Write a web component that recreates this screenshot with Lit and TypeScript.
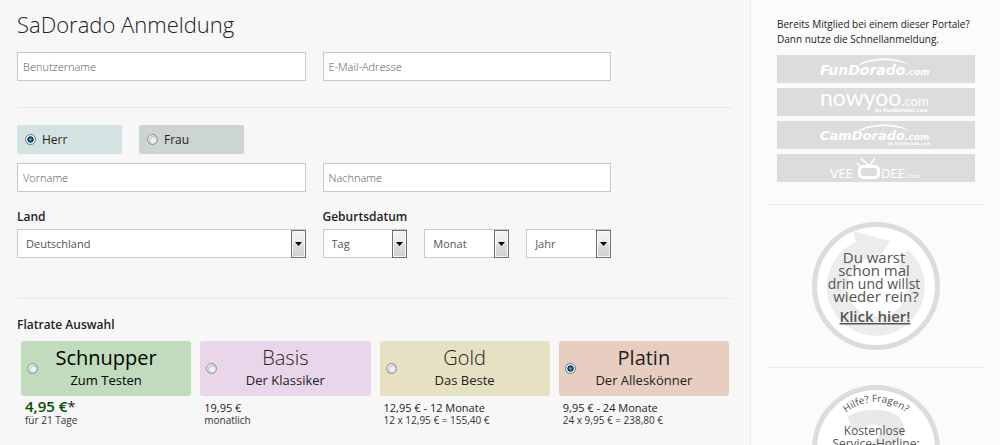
import { LitElement, html, svg, css } from "lit";
import { customElement, state } from "lit/decorators.js";

interface Plan {
  id: string;
  name: string;
  claim: string;
  price: string;
  note: string;
}

const PLANS: Plan[] = [
  { id: "schnupper", name: "Schnupper", claim: "Zum Testen", price: "4,95 €", note: "für 21 Tage" },
  { id: "basis", name: "Basis", claim: "Der Klassiker", price: "19,95 €", note: "monatlich" },
  { id: "gold", name: "Gold", claim: "Das Beste", price: "12,95 € - 12 Monate", note: "12 x 12,95 € = 155,40 €" },
  { id: "platin", name: "Platin", claim: "Der Alleskönner", price: "9,95 € - 24 Monate", note: "24 x 9,95 € = 238,80 €" },
];

const radioStyles = css`
  input[type="radio"] {
    appearance: none;
    flex: none;
    box-sizing: border-box;
    width: 11px;
    height: 11px;
    margin: 0;
    border: 1px solid #8a8f93;
    border-radius: 50%;
    background: radial-gradient(circle at 60% 60%, #f4f4f4 0 20%, #c9ccce 55%, #fff 75%);
  }
  input[type="radio"]:checked {
    border-color: #6d7880;
    background: radial-gradient(circle at 50% 50%, #45b4e0 0 10%, #0f4d74 30%, #123049 44%, #eef3f5 56%);
  }
`;

@customElement("signup-form")
export class SignupForm extends LitElement {
  @state() private gender = "herr";
  @state() private plan = "platin";

  static styles = [
    radioStyles,
    css`
      :host {
        display: block;
        color: #222;
      }
      h1 {
        margin: 0 0 12px;
        font-size: 22px;
        line-height: 32px;
        font-weight: 300;
      }
      .pair {
        display: grid;
        grid-template-columns: 1fr 1fr;
        gap: 17px;
        max-width: 594px;
      }
      .text {
        box-sizing: border-box;
        width: 100%;
        min-width: 0;
        height: 29px;
        padding: 0 5px;
        border: 1px solid #c8c8c8;
        border-radius: 0;
        background: #fff;
        color: #333;
        font: 300 11px/16px "Open Sans", sans-serif;
      }
      .text::placeholder {
        color: #555;
        opacity: 1;
      }
      hr {
        margin: 26px 0 17px;
        border: 0;
        border-top: 1px solid #e9e9e9;
      }
      fieldset {
        min-width: 0;
        margin: 0;
        padding: 0;
        border: 0;
      }
      .genders {
        display: flex;
        gap: 17px;
        margin-bottom: 9px;
      }
      .gender {
        box-sizing: border-box;
        display: flex;
        align-items: center;
        gap: 6px;
        width: 105px;
        height: 29px;
        padding: 0 8px;
        border-radius: 2px;
        background: #cdd5d3;
        font-size: 12px;
        line-height: 18px;
      }
      .gender.on {
        background: #d5e2e2;
      }
      .caption {
        display: block;
        padding: 0;
        font-size: 12px;
        line-height: 16px;
        font-weight: 600;
      }
      .lower {
        margin-top: 17px;
      }
      .lower .caption {
        margin-bottom: 4px;
      }
      .dates {
        display: grid;
        grid-template-columns: repeat(3, 1fr);
        gap: 17px;
      }
      .pick {
        display: grid;
        position: relative;
      }
      .pick select {
        appearance: none;
        box-sizing: border-box;
        width: 100%;
        height: 29px;
        padding: 0 18px 0 8px;
        border: 1px solid #c8c8c8;
        border-radius: 0;
        background: #fff;
        color: #555;
        font: 400 11px/16px "Open Sans", sans-serif;
      }
      .arrow {
        position: absolute;
        top: 1px;
        right: 0;
        width: 15px;
        height: 28px;
        pointer-events: none;
      }
      hr.second {
        margin: 40px 0 18px;
      }
      .plans {
        display: grid;
        grid-template-columns: repeat(4, 1fr);
        gap: 9px;
        padding: 8px 4px 0;
      }
      .card {
        display: grid;
        grid-template-columns: 11px 1fr 11px;
        align-items: center;
        box-sizing: border-box;
        height: 55px;
        padding: 0 6px;
        border-radius: 3px;
        text-align: center;
        font-size: 13px;
        line-height: 18px;
      }
      .title {
        padding-bottom: 4px;
      }
      .name {
        display: block;
        font-size: 20px;
        line-height: 26px;
      }
      .schnupper {
        background: #c1dcbc;
        color: #000;
      }
      .basis {
        background: #ead6ea;
      }
      .gold {
        background: #e6e1c2;
      }
      .platin {
        background: #e8cec0;
      }
      .basis .name,
      .gold .name {
        font-weight: 300;
      }
      .price,
      .note {
        margin: 0 4px;
        font-size: 11px;
        line-height: 13px;
      }
      .price {
        padding-top: 5px;
      }
      .note {
        font-size: 10px;
        color: #333;
      }
      .price.big {
        padding-top: 2px;
        font-size: 15px;
        line-height: 16px;
      }
      .price strong {
        color: #005000;
        font-weight: 600;
      }
    `,
  ];

  private arrow() {
    return html`<svg class="arrow" viewBox="0 0 15 28" aria-hidden="true">
      <defs>
        <linearGradient id="g" x1="0" y1="0" x2="0" y2="1">
          <stop offset="0" stop-color="#f3f3f3"></stop>
          <stop offset=".5" stop-color="#ebebeb"></stop>
          <stop offset=".5" stop-color="#dedede"></stop>
          <stop offset="1" stop-color="#cfcfcf"></stop>
        </linearGradient>
      </defs>
      <rect x=".5" y=".5" width="14" height="27" fill="url(#g)" stroke="#707070"></rect>
      <rect x="1.5" y="1.5" width="12" height="25" fill="none" stroke="#f6f6f6"></rect>
      <path d="M4 12h7l-3.500 4z" fill="#000"></path>
    </svg>`;
  }

  private pick(id: string, label: string, option: string, own = true) {
    return html`<span class="pick">
      ${own
        ? html`<select id=${id} aria-label=${label}><option>${option}</option></select>`
        : html`<select id=${id}><option>${option}</option></select>`}
      ${this.arrow()}
    </span>`;
  }

  private genderChoice(id: string, label: string) {
    return html`<label class="gender ${this.gender === id ? "on" : ""}">
      <input type="radio" name="gender" .checked=${this.gender === id} @change=${() => (this.gender = id)} />
      ${label}
    </label>`;
  }

  private planChoice(p: Plan) {
    const first = p.id === "schnupper";
    return html`<div>
      <label class="card ${p.id}">
        <input type="radio" name="plan" .checked=${this.plan === p.id} @change=${() => (this.plan = p.id)} />
        <span class="title"><span class="name">${p.name}</span>${p.claim}</span>
      </label>
      <div class="price ${first ? "big" : ""}">${first ? html`<strong>${p.price}</strong>*` : p.price}</div>
      <div class="note">${p.note}</div>
    </div>`;
  }

  render() {
    return html`<form>
      <h1>SaDorado Anmeldung</h1>
      <div class="pair">
        <input class="text" placeholder="Benutzername" aria-label="Benutzername" />
        <input class="text" type="email" placeholder="E-Mail-Adresse" aria-label="E-Mail-Adresse" />
      </div>
      <hr />
      <fieldset class="genders" aria-label="Anrede">
        ${this.genderChoice("herr", "Herr")}${this.genderChoice("frau", "Frau")}
      </fieldset>
      <div class="pair">
        <input class="text" placeholder="Vorname" aria-label="Vorname" />
        <input class="text" placeholder="Nachname" aria-label="Nachname" />
      </div>
      <div class="pair lower">
        <div>
          <label class="caption" for="land">Land</label>
          ${this.pick("land", "Land", "Deutschland", false)}
        </div>
        <fieldset>
          <legend class="caption">Geburtsdatum</legend>
          <div class="dates">
            ${this.pick("tag", "Tag", "Tag")}${this.pick("monat", "Monat", "Monat")}${this.pick("jahr", "Jahr", "Jahr")}
          </div>
        </fieldset>
      </div>
      <hr class="second" />
      <fieldset>
        <legend class="caption">Flatrate Auswahl</legend>
        <div class="plans">${PLANS.map((p) => this.planChoice(p))}</div>
      </fieldset>
    </form>`;
  }
}

@customElement("portal-sidebar")
export class PortalSidebar extends LitElement {
  static styles = css`
    :host {
      display: block;
      color: #222;
    }
    .intro {
      margin: 0 9px 8px;
      font-size: 10px;
      line-height: 15px;
    }
    .portals {
      display: grid;
      gap: 5px;
      margin: 0 9px 22px;
    }
    .portal {
      display: block;
      height: 28px;
      background: #dcdcdc;
      color: #fff;
    }
    svg {
      overflow: visible;
    }
    .portal svg {
      display: block;
      width: 100%;
      height: 28px;
      fill: currentColor;
    }
    .wide {
      font-family: "DejaVu Sans", sans-serif;
    }
    .slant {
      font-weight: 700;
      font-style: italic;
    }
    .round {
      font-family: Lato, sans-serif;
    }
    hr {
      margin: 17px 0;
      border: 0;
      border-top: 1px solid #e9e9e9;
    }
    .badge {
      display: block;
      width: 128px;
      margin: 0 auto;
      color: #555;
    }
    .badge svg {
      display: block;
      width: 100%;
      fill: currentColor;
      font-family: "Open Sans", sans-serif;
    }
    .link {
      font-weight: 600;
      text-decoration: underline;
      text-decoration-thickness: 1px;
      text-underline-offset: 2px;
    }
  `;

  private swoosh = svg`<path d="M81 10C92 2 121 1 132 10C119 4 97 4 86 9z"></path>`;

  render() {
    return html`
      <p class="intro">Bereits Mitglied bei einem dieser Portale?<br />Dann nutze die Schnellanmeldung.</p>
      <nav class="portals">
        <a class="portal" href="#fundorado" aria-label="FunDorado.com">
          <svg viewBox="0 0 198 28" class="wide slant">
            ${this.swoosh}
            <text x="43" y="20" font-size="14">FunDorado<tspan font-size="9">.com</tspan></text>
          </svg>
        </a>
        <a class="portal" href="#nowyoo" aria-label="nowyoo.com">
          <svg viewBox="0 0 198 28" class="round">
            <text x="43" y="18" font-size="23">nowyoo<tspan font-size="13">.com</tspan></text>
            <text x="98" y="24" font-size="5" font-weight="700" class="wide">by FunDorado.com</text>
          </svg>
        </a>
        <a class="portal" href="#camdorado" aria-label="CamDorado.com">
          <svg viewBox="0 0 198 28" class="wide slant">
            ${this.swoosh}
            <text x="43" y="19" font-size="13">CamDorado<tspan font-size="9">.com</tspan></text>
            <text x="111" y="24" font-size="4">by FunDorado.com</text>
          </svg>
        </a>
        <a class="portal" href="#veeodee" aria-label="VeeOdee.com">
          <svg viewBox="0 0 198 28" class="wide">
            <text x="53" y="24" font-size="12">VEE</text>
            <rect x="82.500" y="12.500" width="19" height="11" rx="4" fill="none" stroke="currentColor" stroke-width="3"></rect>
            <path d="M84 4l8 8 6-8M80 9l4 4" fill="none" stroke="currentColor" stroke-width="1.500"></path>
            <text x="104" y="24" font-size="12">DEE<tspan font-size="6">.com</tspan></text>
          </svg>
        </a>
      </nav>
      <hr />
      <a class="badge" href="#rejoin">
        <svg viewBox="0 0 128 128" text-anchor="middle">
          <circle cx="64" cy="64" r="61.500" fill="#fff" stroke="#dcdcdc" stroke-width="5"></circle>
          <path d="M41 9L78 19L68 35A30 30 0 1 0 87 44L95 27A49 49 0 1 1 44 20z" fill="#ececec"></path>
          <text font-size="15">
            <tspan x="64" y="41">Du warst</tspan>
            <tspan x="64" y="54">schon mal</tspan>
            <tspan x="64" y="67" font-size="14">drin und willst</tspan>
            <tspan x="64" y="80">wieder rein?</tspan>
          </text>
          <text x="63" y="100" font-size="15" class="link">Klick hier!</text>
        </svg>
      </a>
      <hr />
      <a class="badge" href="#hotline">
        <svg viewBox="0 0 128 128" text-anchor="middle">
          <circle cx="64" cy="64" r="61.500" fill="#fff" stroke="#dcdcdc" stroke-width="5"></circle>
          <path d="M35 32C50 21 92 21 92 44C92 58 72 60 72 74H55C55 56 70 52 70 44C70 38 54 38 42 47z" fill="#e9e9e9"></path>
          <path id="arc" d="M17 64A47 47 0 0 1 111 64" fill="none"></path>
          <text font-size="10"><textPath href="#arc" startOffset="50%">Hilfe? Fragen?</textPath></text>
          <text font-size="12">
            <tspan x="64" y="50">Kostenlose</tspan>
            <tspan x="64" y="63">Service-Hotline:</tspan>
          </text>
        </svg>
      </a>
    `;
  }
}

@customElement("app-root")
export class AppRoot extends LitElement {
  static styles = css`
    :host {
      display: flex;
      height: 100vh;
      overflow-y: auto;
      scrollbar-width: none;
      background: #f7f7f7;
      font-family: "Open Sans", sans-serif;
    }
    .main {
      flex: 3;
      min-width: 0;
      padding: 8px 17px;
    }
    .side {
      box-sizing: border-box;
      flex: 0 0 25%;
      min-height: max-content;
      padding: 17px 16px 17px 17px;
      border-left: 1px solid #e9e9e9;
      background: #fbfbfb;
    }
  `;

  render() {
    return html`
      <main class="main"><signup-form></signup-form></main>
      <aside class="side"><portal-sidebar></portal-sidebar></aside>
    `;
  }
}
